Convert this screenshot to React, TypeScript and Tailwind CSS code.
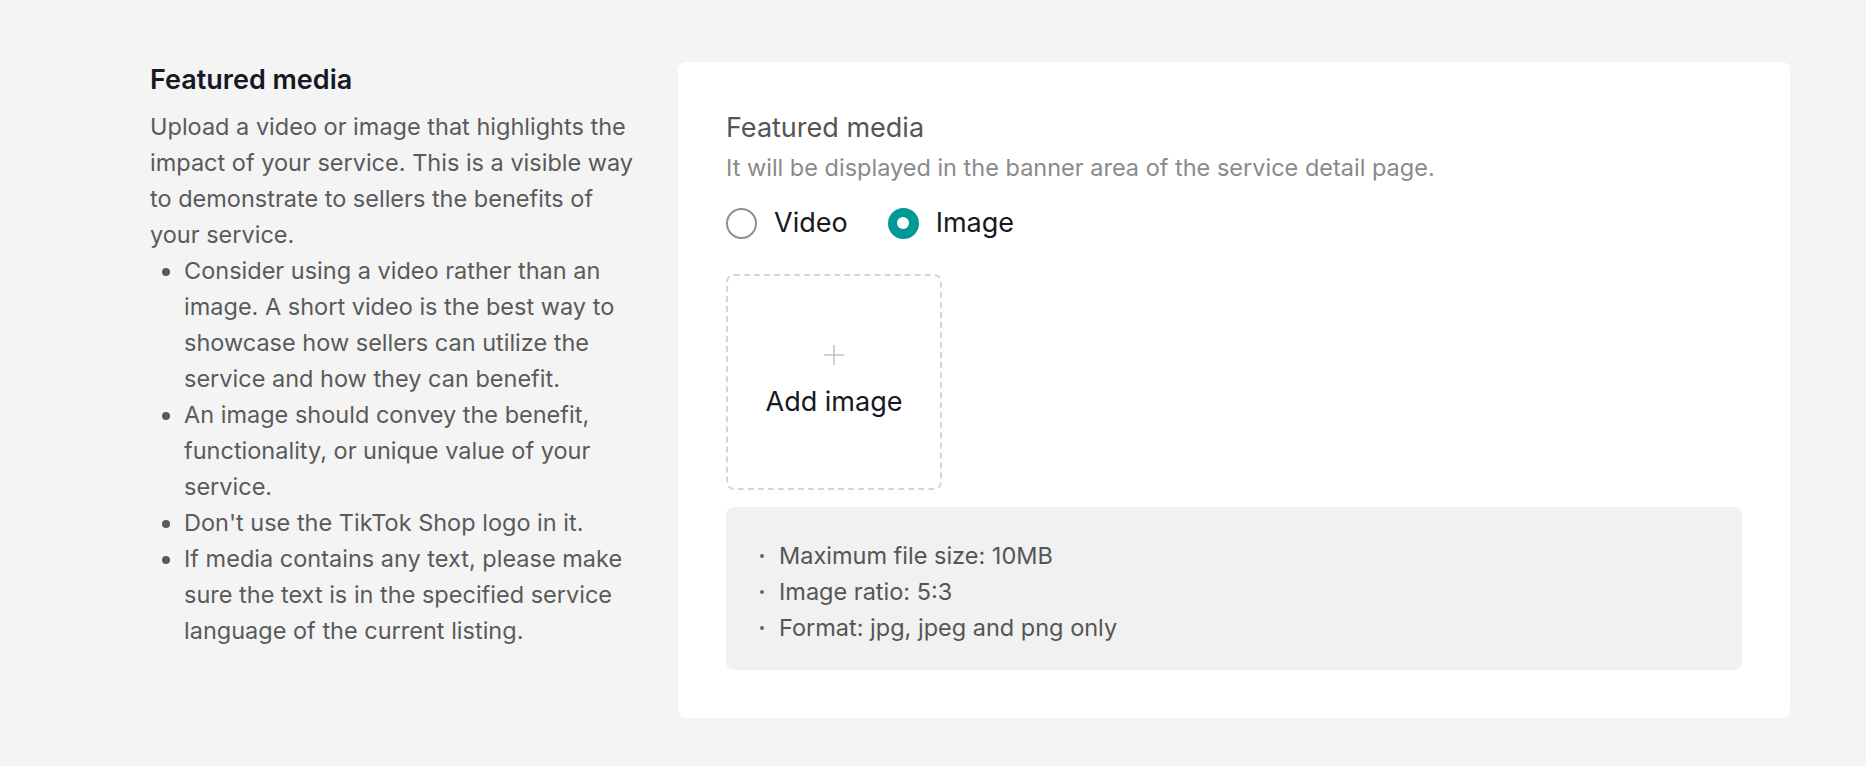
import React, { useState } from "react";

const tips = [
  "Consider using a video rather than an image. A short video is the best way to showcase how sellers can utilize the service and how they can benefit.",
  "An image should convey the benefit, functionality, or unique value of your service.",
  "Don't use the TikTok Shop logo in it.",
  "If media contains any text, please make sure the text is in the specified service language of the current listing.",
];

const rules = [
  "Maximum file size: 10MB",
  "Image ratio: 5:3",
  "Format: jpg, jpeg and png only",
];

const Radio: React.FC<{ checked: boolean; label: string; onClick: () => void }> = ({
  checked,
  label,
  onClick,
}) => (
  <button onClick={onClick} className="flex items-center gap-[17px]">
    {checked ? (
      <span className="flex h-[31px] w-[31px] items-center justify-center rounded-full bg-[#009995]">
        <span className="h-[12px] w-[12px] rounded-full bg-white"></span>
      </span>
    ) : (
      <span className="h-[31px] w-[31px] rounded-full border-[2px] border-[#8f8f8f] bg-white"></span>
    )}
    <span className="text-[27px] leading-[36px] text-[#161823]">{label}</span>
  </button>
);

export default function App() {
  const [mediaType, setMediaType] = useState<"video" | "image">("image");

  return (
    <div className="min-h-[766px] bg-[#f4f4f4] pt-[62px] pl-[150px] font-['Inter',sans-serif]">
      <div className="flex gap-[36px]">
        <div className="w-[492px] shrink-0">
          <h2 className="text-[27px] font-semibold leading-[36px] text-[#161823]">
            Featured media
          </h2>
          <p className="mt-[11px] text-[23.5px] leading-[36px] text-[#5a5a5a]">
            Upload a video or image that highlights the impact of your service. This is a visible way
            to demonstrate to sellers the benefits of your service.
          </p>
          <ul className="list-disc pl-[34px] text-[23.5px] leading-[36px] text-[#5a5a5a] marker:text-[#5a5a5a]">
            {tips.map((t) => (
              <li key={t}>{t}</li>
            ))}
          </ul>
        </div>

        <div className="w-[1112px] rounded-[8px] bg-white p-[48px]">
          <div className="text-[27px] leading-[36px] text-[#555555]">Featured media</div>
          <div className="mt-[4px] text-[23.5px] leading-[36px] text-[#8a8a8a]">
            It will be displayed in the banner area of the service detail page.
          </div>

          <div className="mt-[19px] flex items-center gap-[40px]">
            <Radio checked={mediaType === "video"} label="Video" onClick={() => setMediaType("video")} />
            <Radio checked={mediaType === "image"} label="Image" onClick={() => setMediaType("image")} />
          </div>

          <div className="mt-[33px] flex h-[216px] w-[216px] flex-col items-center justify-center rounded-[8px] border-[2px] border-dashed border-[#d6d6d6]">
            <svg width="20" height="20" viewBox="0 0 20 20">
              <path d="M10 0v20M0 10h20" stroke="#c2c2c2" strokeWidth="1.5" fill="none" />
            </svg>
            <div className="mt-[19px] text-[27px] leading-[36px] text-[#161823]">Add image</div>
          </div>

          <div className="mt-[17px] rounded-[8px] bg-[#f0f1f0] px-[34px] pt-[31px] pb-[24px]">
            <ul>
              {rules.map((r) => (
                <li key={r} className="flex items-center text-[23.5px] leading-[36px] text-[#555555]">
                  <span className="mr-[15px] h-[4px] w-[4px] rounded-full bg-[#666666]"></span>
                  {r}
                </li>
              ))}
            </ul>
          </div>
        </div>
      </div>
    </div>
  );
}
